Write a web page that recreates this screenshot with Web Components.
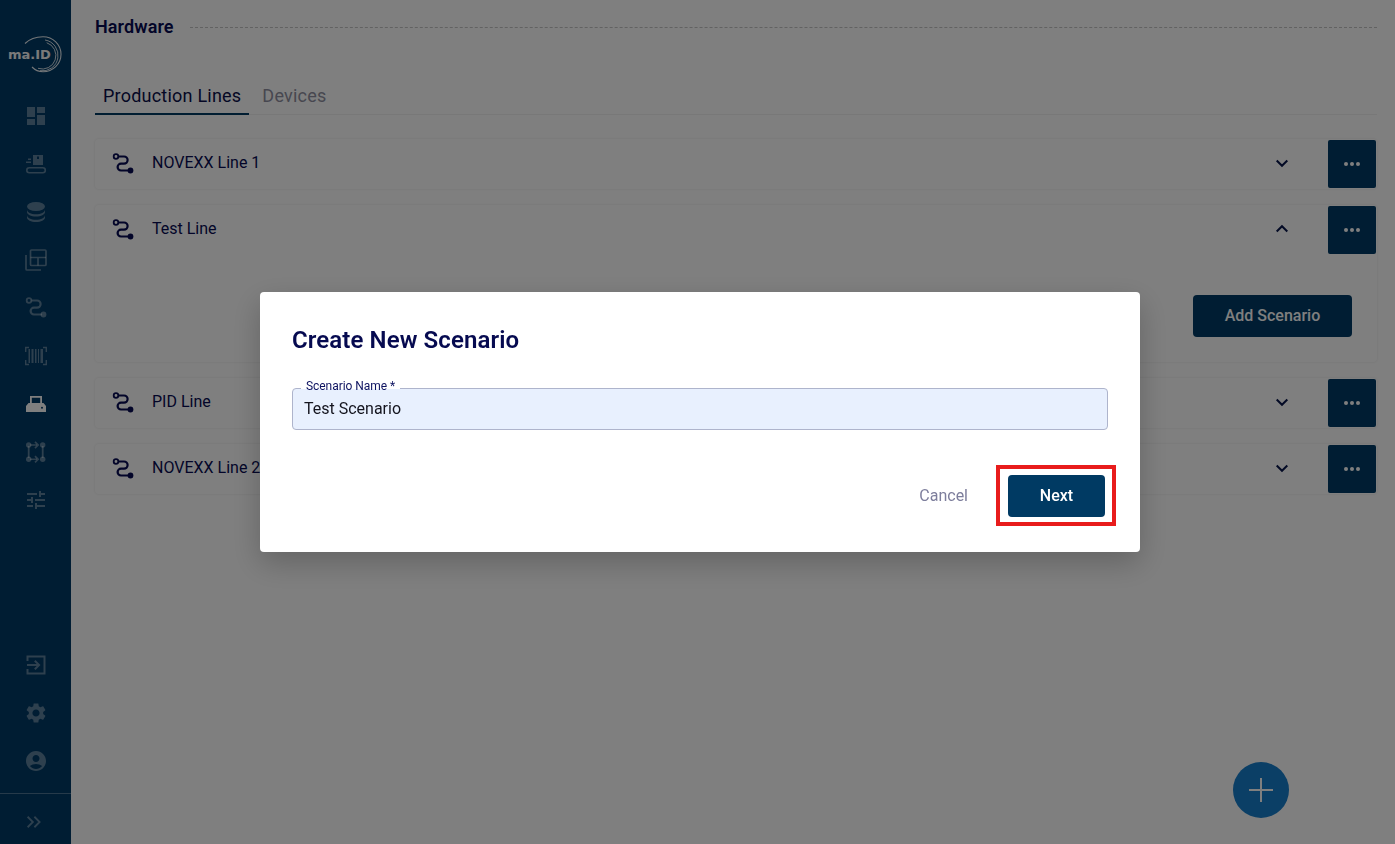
<!DOCTYPE html>
<html lang="en">
<head>
<meta charset="utf-8">
<title>Hardware</title>
<style>
html, body { margin: 0; height: 100%; overflow: hidden; background: #fff; font-family: Roboto, "Liberation Sans", sans-serif; }
body { display: flex; }
</style>
</head>
<body>
<app-sidebar></app-sidebar>
<hardware-page>
  <line-card label="NOVEXX Line 1"></line-card>
  <line-card label="Test Line" open></line-card>
  <line-card label="PID Line"></line-card>
  <line-card label="NOVEXX Line 2"></line-card>
</hardware-page>
<fab-button></fab-button>
<modal-overlay>
  <scenario-dialog></scenario-dialog>
</modal-overlay>

<script>
// all the icons live here, 24x24 viewbox
const ICONS = {
  dashboard: '<path fill="currentColor" d="M3 13h8V3H3v10zm0 8h8v-6H3v6zm10 0h8V11h-8v10zm0-18v6h8V3h-8z"/>',
  conveyor: '<path fill="currentColor" fill-rule="evenodd" d="M9 3h10v10H9zM13 4.500v2.500h2V4.500z"/><path fill="currentColor" d="M4 6.500h3V8H4zM2 9.500h5V11H2z"/><rect x="2.800" y="15.800" width="18.500" height="5" rx="2.500" fill="none" stroke="currentColor" stroke-width="1.600"/>',
  database: '<ellipse cx="12" cy="6.500" rx="9" ry="4.500" fill="currentColor"/><path fill="currentColor" d="M3 9.500c0 2.800 4 4.800 9 4.800s9-2 9-4.800v2.600c0 2.600-4 4.500-9 4.500s-9-1.900-9-4.500z"/><path fill="currentColor" d="M3 15c0 2.800 4 4.800 9 4.800s9-2 9-4.800v2.500c0 2.600-4 4.500-9 4.500s-9-1.900-9-4.500z"/>',
  layout: '<g fill="none" stroke="currentColor" stroke-width="1.700"><rect x="6.500" y="2" width="15.500" height="15.500" rx="1"/><path d="M6.500 9.500h15.500M14 9.500v8M2 7v14a1 1 0 0 0 1 1h14"/></g>',
  route: '<circle cx="5" cy="4.500" r="2.300" fill="none" stroke="currentColor" stroke-width="1.800"/><path fill="none" stroke="currentColor" stroke-width="2.200" d="M7.500 4.500h5.500a3.600 3.600 0 0 1 0 7.200h-3a3.200 3.200 0 0 0 0 6.800h8"/><circle cx="19.500" cy="18.500" r="2.900" fill="currentColor"/>',
  barcode: '<path fill="none" stroke="currentColor" stroke-width="1.400" d="M5 3.500H1.700V8M19 3.500h3.300V8M5 20.500H1.700V16M19 20.500h3.300V16"/><path fill="currentColor" d="M4.500 5h1.500v14H4.500zM7.500 5h2v14h-2zM11 5h1.500v14H11zM14 5h1v14h-1zM16.500 5h2.500v14h-2.500z"/>',
  printer: '<path fill="none" stroke="currentColor" stroke-width="1.800" d="M6.900 11.500V4.900h10.200v6.600"/><path fill="currentColor" fill-rule="evenodd" d="M4.500 11h15L22 14v6H2v-6zM18 14.700a1 1 0 1 0 0 2 1 1 0 0 0 0-2z"/>',
  transfer: '<g fill="currentColor"><circle cx="4.700" cy="5" r="2.700"/><circle cx="18.700" cy="5" r="2.700"/><circle cx="4.700" cy="19.300" r="2.700"/><circle cx="18.700" cy="19.300" r="2.700"/><path d="M3.800 6h1.800v12H3.800zM17.800 6h1.800v12h-1.800zM6 4.200h7v1.600H6zM6 18.500h7v1.600H6z"/></g><path fill="none" stroke="currentColor" stroke-width="1.700" d="M11 1.900L14.100 5 11 8.100M11 16.200l3.100 3.100-3.100 3.100"/>',
  tune: '<path fill="currentColor" d="M3 17v2h6v-2H3zM3 5v2h10V5H3zm10 16v-2h8v-2h-8v-2h-2v6h2zM7 9v2H3v2h4v2h2V9H7zm14 4v-2H11v2h10zm-6-4h2V7h4V5h-4V3h-2v6z"/>',
  exit: '<path fill="currentColor" d="M21.500 2.500h-19V8h2V4.500h15v15h-15V16h-2v5.500h19z"/><path fill="currentColor" d="M10.090 15.590L11.500 17l5-5-5-5-1.410 1.410L12.670 11H3v2h9.670z"/>',
  settings: '<path fill="currentColor" d="M19.140 12.940c.04-.3.06-.61.06-.94 0-.32-.02-.64-.07-.94l2.030-1.580c.18-.14.23-.41.12-.61l-1.920-3.320c-.12-.22-.37-.29-.59-.22l-2.390.96c-.5-.38-1.030-.7-1.620-.94l-.36-2.540c-.04-.24-.24-.41-.48-.41h-3.840c-.24 0-.43.17-.47.41l-.36 2.540c-.59.24-1.130.57-1.620.94l-2.390-.96c-.22-.08-.47 0-.59.22L2.740 8.870c-.12.21-.08.47.12.61l2.030 1.580c-.05.3-.09.63-.09.94s.02.64.07.94l-2.030 1.580c-.18.14-.23.41-.12.61l1.920 3.320c.12.22.37.29.59.22l2.390-.96c.5.38 1.030.7 1.620.94l.36 2.540c.05.24.24.41.48.41h3.840c.24 0 .44-.17.47-.41l.36-2.540c.59-.24 1.130-.56 1.620-.94l2.390.96c.22.08.47 0 .59-.22l1.920-3.320c.12-.22.07-.47-.12-.61l-2.010-1.580zM12 15.600c-1.980 0-3.600-1.620-3.600-3.600s1.620-3.600 3.600-3.600 3.600 1.620 3.600 3.600-1.620 3.600-3.600 3.600z"/>',
  account: '<path fill="currentColor" d="M12 2C6.480 2 2 6.480 2 12s4.480 10 10 10 10-4.480 10-10S17.520 2 12 2zm0 4c1.930 0 3.500 1.570 3.500 3.500S13.930 13 12 13s-3.500-1.570-3.500-3.500S10.070 6 12 6zm0 14c-2.030 0-4.430-.82-6.140-2.880C7.550 15.800 9.680 15 12 15s4.450.8 6.140 2.120C16.430 19.180 14.030 20 12 20z"/>',
  collapse: '<path fill="none" stroke="currentColor" stroke-width="2.400" d="M3.500 5l7 7-7 7M12.500 5l7 7-7 7"/>',
  down: '<path fill="none" stroke="currentColor" stroke-width="2" d="M6.700 9.500l5.300 5.300 5.300-5.300"/>',
  up: '<path fill="none" stroke="currentColor" stroke-width="2" d="M6.700 14.500l5.300-5.300 5.300 5.300"/>',
  plus: '<path fill="none" stroke="currentColor" stroke-width="2" d="M12 0v24M0 12h24"/>'
};

class AppIcon extends HTMLElement {
  connectedCallback() {
    const size = this.getAttribute('size') || 24;
    this.attachShadow({ mode: 'open' }).innerHTML = `
      <style>
        :host { display: inline-flex; width: ${size}px; height: ${size}px; }
        svg { width: 100%; height: 100%; display: block; }
      </style>
      <svg viewBox="0 0 24 24">${ICONS[this.getAttribute('name')]}</svg>`;
  }
}
customElements.define('app-icon', AppIcon);

class SideItem extends HTMLElement {
  connectedCallback() {
    this.attachShadow({ mode: 'open' }).innerHTML = `
      <style>
        :host { display: flex; height: 48px; align-items: center; justify-content: center; color: rgba(255,255,255,.36); }
        :host([active]) { color: #fff; }
      </style>
      <app-icon name="${this.getAttribute('icon')}"></app-icon>`;
  }
}
customElements.define('side-item', SideItem);

class AppSidebar extends HTMLElement {
  constructor() {
    super();
    this.attachShadow({ mode: 'open' }).innerHTML = `
      <style>
        :host { display: flex; flex-direction: column; flex: none; width: 71px; height: 844px; background: #003a66; }
        .logo { height: 92px; flex: none; box-sizing: border-box; padding-top: 33px; display: grid; justify-items: start; align-items: start; }
        .logo > * { grid-area: 1 / 1; }
        .logo svg { width: 71px; height: 44px; display: block; }
        .logo span { margin: 15px 0 0 8px; font: 700 13px/14px "DejaVu Sans", sans-serif; color: #f4f4f4; }
        .spacer { flex: 1; }
        .toggle { border-top: 1px solid rgba(255,255,255,.3); height: 51px; flex: none; display: flex; justify-content: center; padding: 19px 3px 0 0; box-sizing: border-box; color: rgba(255,255,255,.36); }
        .bottom { margin-bottom: 8px; }
      </style>
      <div class="logo">
        <svg viewBox="0 0 71 44" fill="none" stroke="#fff" stroke-opacity=".9">
          <path stroke-width="1.100" d="M25 10.500C30 5.500 36 3.700 43 3.700A18 17.500 0 0 1 43 38.700C39 38.700 35 37 32 34"/>
          <path stroke-width=".9" d="M45 7A15.300 15.300 0 0 1 40 37.700"/>
          <path stroke-width=".9" d="M46.700 9.700A13 13 0 0 1 38 35.300"/>
        </svg>
        <span>ma.ID</span>
      </div>
      <side-item icon="dashboard"></side-item>
      <side-item icon="conveyor"></side-item>
      <side-item icon="database"></side-item>
      <side-item icon="layout"></side-item>
      <side-item icon="route"></side-item>
      <side-item icon="barcode"></side-item>
      <side-item icon="printer" active></side-item>
      <side-item icon="transfer"></side-item>
      <side-item icon="tune"></side-item>
      <div class="spacer"></div>
      <div class="bottom">
        <side-item icon="exit"></side-item>
        <side-item icon="settings"></side-item>
        <side-item icon="account"></side-item>
      </div>
      <div class="toggle"><app-icon name="collapse" size="18"></app-icon></div>`;
  }
}
customElements.define('app-sidebar', AppSidebar);

class HardwarePage extends HTMLElement {
  constructor() {
    super();
    this.attachShadow({ mode: 'open' }).innerHTML = `
      <style>
        :host { display: block; flex: 1; min-width: 0; box-sizing: border-box; padding: 15px 18px 0 24px; color: #0a0f5a; }
        .head { display: flex; align-items: center; gap: 16px; height: 24px; }
        h1 { margin: 0; font: 600 18px/24px Roboto, sans-serif; letter-spacing: .1px; color: #070b52; }
        .head i { flex: 1; border-top: 1px dashed #c4c4c4; }
        .tabs { display: flex; margin-top: 36px; height: 39px; border-bottom: 1px solid #f0f0f0; }
        .tab { padding: 0 8px; margin-right: 5px; font: 400 18px/42px Roboto, sans-serif; letter-spacing: .22px; color: #8f8fa0; box-sizing: border-box; }
        .tab.on { color: #0a0f4a; border-bottom: 2px solid #003a63; height: 40px; }
        .list { display: flex; flex-direction: column; gap: 16px; margin-top: 24px; }
      </style>
      <div class="head"><h1>Hardware</h1><i></i></div>
      <div class="tabs"><div class="tab on">Production Lines</div><div class="tab">Devices</div></div>
      <div class="list"><slot></slot></div>`;
  }
}
customElements.define('hardware-page', HardwarePage);

class LineCard extends HTMLElement {
  connectedCallback() {
    const open = this.hasAttribute('open');
    this.attachShadow({ mode: 'open' }).innerHTML = `
      <style>
        :host { display: block; background: #fff; border-radius: 4px; box-shadow: 0 0 3px rgba(0,0,0,.1); }
        .row { display: flex; align-items: center; height: 50px; padding: 0 1px 0 16px; }
        .name { flex: 1; margin: 0 0 2px 17px; font: 400 16px/24px Roboto, sans-serif; color: #070b52; }
        .route { color: #070b52; margin-bottom: 1px; }
        .chev { margin: 0 34px 2px 0; color: #07154a; }
        .more { width: 48px; height: 48px; flex: none; border-radius: 2px; background: #003a66; display: flex; align-items: center; justify-content: center; gap: 2px; }
        .more b { width: 4px; height: 4px; border-radius: 50%; background: #fff; }
        .body { display: flex; justify-content: flex-end; padding: 40px 25px 25px 0; }
        .add { width: 159px; height: 42px; border-radius: 4px; background: #003a66; color: #fff; font: 500 16px/42px Roboto, sans-serif; text-align: center; }
      </style>
      <div class="row">
        <app-icon class="route" name="route"></app-icon>
        <span class="name">${this.getAttribute('label')}</span>
        <app-icon class="chev" name="${open ? 'up' : 'down'}"></app-icon>
        <div class="more"><b></b><b></b><b></b></div>
      </div>
      ${open ? '<div class="body"><div class="add">Add Scenario</div></div>' : ''}`;
  }
}
customElements.define('line-card', LineCard);

class FabButton extends HTMLElement {
  constructor() {
    super();
    this.attachShadow({ mode: 'open' }).innerHTML = `
      <style>
        :host { position: fixed; left: 1233px; top: 762px; width: 56px; height: 56px; border-radius: 50%; background: #167ecc; color: #fff; display: flex; align-items: center; justify-content: center; }
      </style>
      <app-icon name="plus"></app-icon>`;
  }
}
customElements.define('fab-button', FabButton);

class ModalOverlay extends HTMLElement {
  constructor() {
    super();
    this.attachShadow({ mode: 'open' }).innerHTML = `
      <style>
        :host { position: fixed; inset: 0; padding-left: 5px; background: rgba(0,0,0,.5); display: flex; align-items: center; justify-content: center; }
      </style>
      <slot></slot>`;
  }
}
customElements.define('modal-overlay', ModalOverlay);

class ScenarioDialog extends HTMLElement {
  constructor() {
    super();
    this.attachShadow({ mode: 'open' }).innerHTML = `
      <style>
        :host { display: block; box-sizing: border-box; width: 880px; height: 260px; padding: 32px; background: #fff; border-radius: 4px; box-shadow: 0 11px 30px rgba(0,0,0,.22); }
        h2 { margin: 0; font: 600 24px/32px Roboto, sans-serif; letter-spacing: .1px; color: #060a50; }
        .field { position: relative; margin-top: 32px; height: 42px; box-sizing: border-box; padding: 0 11px; border: 1px solid #aeb4cc; border-radius: 4px; background: #e8f0fe; font: 400 16px/40px Roboto, sans-serif; color: #14141e; }
        .field label { position: absolute; left: 8px; top: -10px; padding: 0 5px; font: 400 12px/14px Roboto, sans-serif; letter-spacing: -.05px; color: #0d1260; background: linear-gradient(#fff 10px, transparent 10px); }
        .actions { display: flex; justify-content: flex-end; align-items: center; margin-top: 45px; padding-right: 3px; }
        .cancel { font: 400 16px/42px Roboto, sans-serif; color: #7d7e9c; margin-right: 40px; }
        .next { position: relative; width: 97px; height: 42px; border-radius: 4px; background: #003a63; color: #fff; font: 500 16px/42px Roboto, sans-serif; text-align: center; }
        .mark { position: absolute; left: -12px; right: -11px; top: -10px; bottom: -9px; border: 4px solid #e81c1c; }
      </style>
      <h2>Create New Scenario</h2>
      <div class="field"><label>Scenario Name *</label>Test Scenario</div>
      <div class="actions"><span class="cancel">Cancel</span><div class="next">Next<span class="mark"></span></div></div>`;
  }
}
customElements.define('scenario-dialog', ScenarioDialog);
</script>
</body>
</html>
